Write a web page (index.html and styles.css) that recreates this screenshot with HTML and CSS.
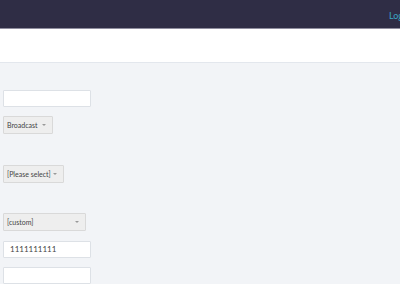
FILE: index.html
```html
<!DOCTYPE html>
<html lang="en">
<head>
  <meta charset="UTF-8" />
  <meta name="viewport" content="width=device-width, initial-scale=1.0" />
  <title>Form</title>
  <link rel="stylesheet" href="styles.css">
</head>
<body>
  <header class="topbar">
    <a href="#" class="login">Login</a>
  </header>
  <div class="subbar"></div>
  <div class="content">
    <div class="field field-1"><div class="input"></div></div>
    <div class="field field-2"><div class="select w52">Broadcast<span class="caret"></span></div></div>
    <div class="field field-3"><div class="select w63">[Please select]<span class="caret"></span></div></div>
    <div class="field field-4"><div class="select w85">[custom]<span class="caret"></span></div></div>
    <div class="field field-5"><div class="input">1111111111</div></div>
    <div class="field field-6"><div class="input"></div></div>
  </div>
</body>
</html>
```

FILE: styles.css
```css
* { box-sizing: border-box; margin: 0; padding: 0; }
html, body { height: 100%; overflow: hidden; }
body { font-family: Lato, "Liberation Sans", sans-serif; background: #f2f4f7; color: #555; font-size: 8px; }
.topbar {
  height: 29px;
  background: #2f2d45;
  border-bottom: 1px solid #8f8d9e;
  display: flex;
  align-items: center;
  padding-left: 389px;
  overflow: hidden;
}
.login {
  color: #3ba6c4;
  text-decoration: none;
  font-size: 9px;
  padding-top: 3px;
  white-space: nowrap;
}
.subbar {
  height: 34px;
  background: white;
  border-bottom: 1px solid #e3e7ed;
}
.content {
  padding-left: 3px;
  display: flex;
  flex-direction: column;
}
.field-1 { margin-top: 27px; }
.field-2 { margin-top: 9px; }
.field-3 { margin-top: 31px; }
.field-4 { margin-top: 30px; }
.field-5 { margin-top: 10px; }
.field-6 { margin-top: 9px; }
.input {
  width: 88px;
  height: 17px;
  background: white;
  border: 1px solid #dde1e6;
  border-radius: 1px;
  padding-left: 6px;
  line-height: 15px;
  color: #444;
  font-size: 8px;
}
.select {
  height: 18px;
  background: #eeeeee;
  border: 1px solid #d9d9d9;
  border-radius: 1px;
  padding-left: 3px;
  line-height: 16px;
  color: #444;
  font-size: 7px;
  position: relative;
}
.w52 { width: 50px; }
.w63 { width: 61px; }
.w85 { width: 83px; }
.caret {
  position: absolute;
  right: 6px;
  top: 7px;
  width: 0;
  height: 0;
  border-left: 2px solid transparent;
  border-right: 2px solid transparent;
  border-top: 2px solid #999;
}
```
